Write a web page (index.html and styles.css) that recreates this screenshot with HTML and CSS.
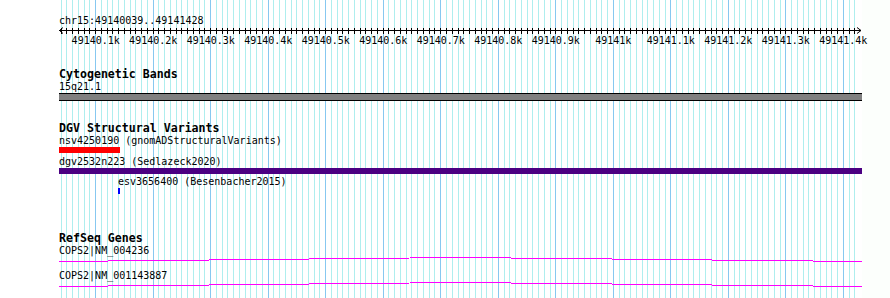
FILE: index.html
```html
<!DOCTYPE html>
<html lang="en">
<head>
<meta charset="UTF-8">
<meta name="viewport" content="width=device-width, initial-scale=1.0">
<title>chr15:49140039..49141428</title>
<link rel="stylesheet" href="styles.css">
</head>
<body>

<div class="browser">
    <svg class="grid" id="grid" width="803" height="298"></svg>

    <div class="ruler">
        <div class="locus">chr15:49140039..49141428</div>
        <svg class="scale" id="scale" width="803" height="21"></svg>
    </div>

    <div class="track cyto">
        <div class="track-title">Cytogenetic Bands</div>
        <div class="label">15q21.1</div>
        <div class="band"></div>
    </div>

    <div class="track dgv">
        <div class="track-title">DGV Structural Variants</div>
        <div class="feature">
            <div class="label">nsv4250190 (gnomADStructuralVariants)</div>
            <div class="bar red" style="width:61px"></div>
        </div>
        <div class="feature">
            <div class="label">dgv2532n223 (Sedlazeck2020)</div>
            <div class="bar purple"></div>
        </div>
        <div class="feature" style="margin-left:59px">
            <div class="label">esv3656400 (Besenbacher2015)</div>
            <div class="bar blue" style="width:2px"></div>
        </div>
    </div>

    <div class="track genes">
        <div class="track-title">RefSeq Genes</div>
        <div class="gene">
            <div class="label">COPS2|NM_004236</div>
            <svg class="intron" width="803" height="12"><polyline points="0,4.5 401,0.5 803,4.5"/></svg>
        </div>
        <div class="gene">
            <div class="label">COPS2|NM_001143887</div>
            <svg class="intron" width="803" height="12"><polyline points="0,4.5 401,0.5 803,4.5"/></svg>
        </div>
    </div>
</div>

<script>
var NS = "http://www.w3.org/2000/svg";
var viewLeft = 59;
var x100 = 95.7;          // screen x of 49140100
var pxPerBp = 0.57508;

function bpToX(bp) {
    return x100 + (bp - 49140100) * pxPerBp - viewLeft;
}

function add(parent, tag, attrs) {
    var el = document.createElementNS(NS, tag);
    for (var k in attrs) el.setAttribute(k, attrs[k]);
    parent.appendChild(el);
    return el;
}

var grid = document.getElementById("grid");
var scale = document.getElementById("scale");

// ruler line and arrows
add(scale, "line", {x1: 0, y1: 3.5, x2: 802, y2: 3.5, "class": "axis"});
add(scale, "polyline", {points: "4,0.5 0.5,3.5 4,6.5", "class": "arrow"});
add(scale, "polyline", {points: "798,0.5 802,3.5 798,6.5", "class": "arrow"});

for (var bp = 49140040; bp <= 49141420; bp += 10) {
    var x = Math.floor(bpToX(bp)) + 0.5;
    var major = bp % 100 === 0;
    add(grid, "line", {x1: x, y1: 0, x2: x, y2: 298, "class": major ? "major" : "minor"});
    add(scale, "line", {x1: x, y1: 1, x2: x, y2: 7, "class": "tick"});
    if (major) {
        var t = add(scale, "text", {x: bpToX(bp), y: 16.5, "class": "tick-label"});
        t.textContent = (bp / 1000) + "k";
    }
}
</script>
</body>
</html>
```

FILE: styles.css
```css
body {
    margin: 0;
    padding: 0;
    background: #fcfffc;
    color: black;
    font-family: "DejaVu Sans Mono", "Liberation Mono", monospace;
    font-size: 10px;
}

.browser {
    position: relative;
    width: 803px;
    height: 298px;
    padding-left: 59px;
    background: #fff;
}

.grid {
    position: absolute;
    left: 59px;
    top: 0;
    z-index: 0;
}

.grid line {
    stroke-width: 1;
    shape-rendering: crispEdges;
}

.grid .minor {
    stroke: #aeeeee;
}

.grid .major {
    stroke: #87c8f0;
}

.ruler, .track {
    position: relative;
    z-index: 1;
}

.ruler {
    padding-top: 15px;
}

.locus {
    line-height: 12px;
}

.scale {
    display: block;
    overflow: visible;
}

.scale .axis, .scale .tick {
    stroke: black;
    stroke-width: 1;
    shape-rendering: crispEdges;
}

.scale .arrow {
    fill: none;
    stroke: black;
    stroke-width: 1;
}

.tick-label {
    font-family: "DejaVu Sans Mono", monospace;
    font-size: 10px;
    text-anchor: middle;
    fill: black;
}

.track-title {
    font-weight: bold;
    font-size: 11.6px;
    line-height: 12px;
    padding-top: 1px;
}

.label {
    line-height: 13px;
    white-space: nowrap;
}

.cyto {
    margin-top: 19px;
}

.band {
    height: 6px;
    background: #808080;
    border-top: 1px solid black;
    border-bottom: 1px solid black;
}

.dgv {
    margin-top: 20px;
}

.feature + .feature {
    margin-top: 1.5px;
}

.bar {
    height: 6px;
}

.red {
    background: #ff0000;
}

.purple {
    background: #4b0082;
}

.blue {
    background: #0000ff;
}

.genes {
    margin-top: 37px;
}

.intron {
    display: block;
}

.intron polyline {
    fill: none;
    stroke: #ff00ff;
    stroke-width: 1;
    shape-rendering: crispEdges;
}
```
